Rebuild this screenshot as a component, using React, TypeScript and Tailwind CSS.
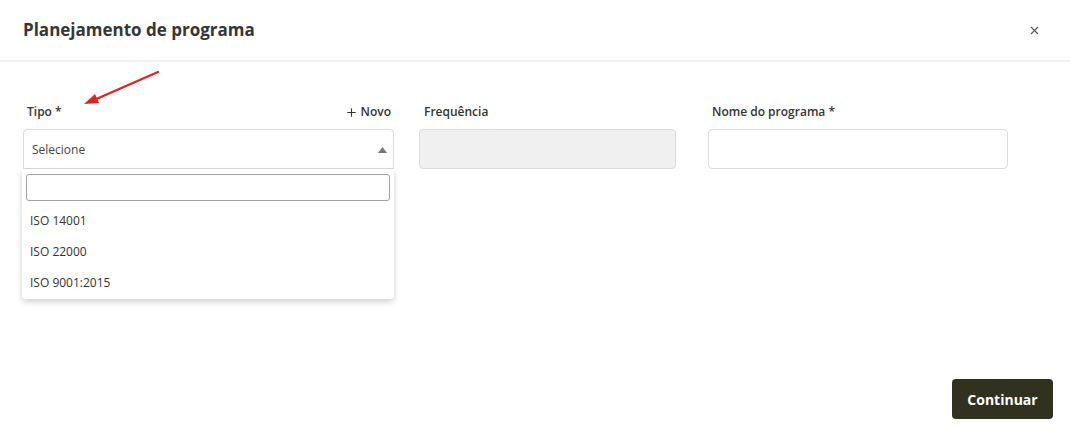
import { Plus, X } from 'lucide-react';

const font = { fontFamily: '"Open Sans", "Noto Sans", sans-serif' };

const options = ['ISO 14001', 'ISO 22000', 'ISO 9001:2015'];

export default function App() {
  return (
    <div className="relative flex h-[440px] w-[1070px] flex-col bg-white text-[#333333]" style={font}>
      {/* header */}
      <div className="flex h-[62px] items-center justify-between border-b-2 border-[#f2f2f2] pl-[23px] pr-[29px]">
        <h1 className="text-[17px] font-bold text-[#363636]">Planejamento de programa</h1>
        <X className="h-[13px] w-[13px] text-[#555555]" strokeWidth={2} />
      </div>

      {/* red arrow annotation */}
      <svg className="pointer-events-none absolute left-[80px] top-[68px] z-20" width="84" height="42" viewBox="0 0 84 42">
        <line x1="78" y1="4" x2="14" y2="32" stroke="#e8201c" strokeWidth="2.2" strokeLinecap="round" />
        <polygon points="4,36 15,26 19,35" fill="#e8201c" />
      </svg>

      {/* body */}
      <div className="flex flex-1 flex-col pl-[23px] pt-[42px]">
        <div className="flex items-start">
          {/* Tipo */}
          <div className="relative flex w-[371px] flex-col">
            <div className="flex h-[16px] items-center justify-between pl-1 text-[12px] font-semibold">
              <span>Tipo *</span>
              <span className="flex items-center gap-[3px] pr-[3px]">
                <Plus className="h-[13px] w-[13px]" strokeWidth={2} />
                Novo
              </span>
            </div>
            <div className="mt-[9px] flex h-[40px] items-center justify-between rounded-t border border-[#dcdcdc] pl-[8px] pr-[6px] pt-[2px] text-[12px] text-[#444444]">
              <span>Selecione</span>
              <svg width="9" height="6" viewBox="0 0 9 6">
                <polygon points="0,6 4.5,0 9,6" fill="#777777" />
              </svg>
            </div>
            {/* hidden second-row field */}
            <div className="mt-[41px] h-[40px] rounded border border-[#e6e6e6]" />

            {/* dropdown */}
            <div className="absolute left-[-1px] top-[65px] z-10 flex w-[372px] flex-col rounded-b bg-white px-[4px] pb-[1px] pt-[5px] shadow-[0_3px_6px_rgba(0,0,0,0.18)]">
              <div className="h-[27px] rounded-[3px] border border-[#a3a3a3]" />
              <div className="mt-[4px] flex flex-col">
                {options.map((o) => (
                  <div key={o} className="flex h-[31px] items-center pl-[4px] text-[12px] text-[#333333]">
                    {o}
                  </div>
                ))}
              </div>
            </div>
          </div>

          {/* Frequência */}
          <div className="ml-[25px] flex w-[257px] flex-col">
            <div className="flex h-[16px] items-center pl-[5px] text-[12px] font-semibold">Frequência</div>
            <div className="mt-[9px] h-[40px] rounded border border-[#dcdcdc] bg-[#f0f0f0]" />
          </div>

          {/* Nome */}
          <div className="ml-[32px] flex w-[300px] flex-col">
            <div className="flex h-[16px] items-center pl-[4px] text-[12px] font-semibold">Nome do programa *</div>
            <div className="mt-[9px] h-[40px] rounded border border-[#dcdcdc] bg-white" />
          </div>
        </div>
      </div>

      {/* footer */}
      <div className="flex justify-end pb-[21px] pr-[17px]">
        <button className="h-[40px] w-[101px] rounded bg-[#313120] text-[14px] font-bold text-white">
          Continuar
        </button>
      </div>
    </div>
  );
}
